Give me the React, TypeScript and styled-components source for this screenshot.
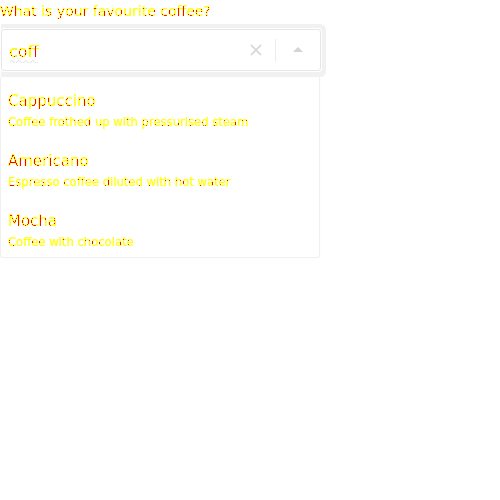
import React, { useState } from "react";
import styled, { createGlobalStyle, css } from "styled-components";

const GlobalStyle = createGlobalStyle`
    body {
        margin: 0;
        background: #ffffff;
        font-family: "DejaVu Sans", Verdana, sans-serif;
    }
`;

const coffees = [
    { name: "Cappuccino", description: "Coffee frothed up with pressurised steam" },
    { name: "Americano", description: "Espresso coffee diluted with hot water" },
    { name: "Mocha", description: "Coffee with chocolate" },
];

// posterises the antialiased text into white / yellow / red
const PosterFilter = () => (
    <svg width="0" height="0" style={{ position: "absolute" }}>
        <filter id="poster" colorInterpolationFilters="sRGB">
            <feComponentTransfer>
                <feFuncR type="discrete" tableValues="1" />
                <feFuncG type="discrete" tableValues="0 1 1 1 1 1 1 1" />
                <feFuncB type="discrete" tableValues="0 0 0 0 0 1 1 1" />
            </feComponentTransfer>
        </filter>
    </svg>
);

const posterText = css`
    width: max-content;
    color: #000000;
    -webkit-text-stroke: 0.25px #a0a0a0;
    filter: url(#poster);
`;

export default function App() {
    const [query, setQuery] = useState("coff");

    return (
        <>
            <GlobalStyle />
            <PosterFilter />
            <Page>
                <Label htmlFor="coffee">What is your favourite coffee?</Label>
                <FocusRing>
                    <Control>
                        <InputWrap>
                            <Input id="coffee" spellCheck={false} value={query} onChange={(e) => setQuery(e.currentTarget.value)} />
                            <Squiggle width="28" height="4" viewBox="0 0 28 4">
                                <path d="M0 3 Q1.75 0 3.5 3 T7 3 T10.5 3 T14 3 T17.5 3 T21 3 T24.5 3 T28 3" fill="none" stroke="#e0e0e0" strokeWidth="1" />
                            </Squiggle>
                        </InputWrap>
                        <Indicators>
                            <ClearButton aria-label="clear">
                                <svg width="12" height="12" viewBox="0 0 12 12">
                                    <path d="M1 1 L11 11 M11 1 L1 11" stroke="#d4d4d4" strokeWidth="1.6" />
                                </svg>
                            </ClearButton>
                            <Separator />
                            <ToggleButton aria-label="toggle">
                                <svg width="10" height="6" viewBox="0 0 10 6">
                                    <path d="M0 6 L5 1 L10 6 Z" fill="#d4d4d4" />
                                </svg>
                            </ToggleButton>
                        </Indicators>
                    </Control>
                </FocusRing>
                <Menu>
                    {coffees.map((c) => (
                        <Option key={c.name}>
                            <OptionTitle>{c.name}</OptionTitle>
                            <OptionText>{c.description}</OptionText>
                        </Option>
                    ))}
                </Menu>
            </Page>
        </>
    );
}

// STYLES
const Page = styled.div`
    width: 330px;
    padding-top: 3px;
`;

const Label = styled.label`
    ${posterText};
    display: block;
    font-size: 14px;
    line-height: 16px;
    margin-bottom: 5px;
`;

const FocusRing = styled.div`
    width: 320px;
    padding: 5px 5px 6px 0;
    margin-left: 1px;
    background: #f1f1f1;
    border-radius: 0 6px 6px 0;
`;

const Control = styled.div`
    display: flex;
    align-items: center;
    height: 40px;
    background: #ffffff;
    border: 1px solid #e6e6e6;
    border-radius: 3px;
    box-shadow: 0 0 0 1px #ffffff;
`;

const InputWrap = styled.div`
    position: relative;
    flex: 1;
    min-width: 0;
    display: flex;
    align-items: center;
    height: 100%;
    padding-top: 3px;
    box-sizing: border-box;
`;

const Input = styled.input`
    width: 100%;
    border: none;
    outline: none;
    padding: 0 0 0 7px;
    font-family: "DejaVu Sans", Verdana, sans-serif;
    font-size: 16px;
    color: #000000;
    -webkit-text-stroke: 0.25px #a0a0a0;
    background: #ffffff;
    filter: url(#poster);
`;

const Squiggle = styled.svg`
    position: absolute;
    left: 8px;
    top: 29px;
`;

const Indicators = styled.div`
    display: flex;
    align-items: center;
    height: 100%;
`;

const ClearButton = styled.div`
    display: flex;
    align-items: center;
    justify-content: center;
    width: 38px;
    height: 100%;
`;

const Separator = styled.span`
    width: 1px;
    height: 23px;
    background: #ececec;
`;

const ToggleButton = styled.div`
    display: flex;
    align-items: center;
    justify-content: center;
    width: 44px;
    height: 100%;
    padding-bottom: 2px;
`;

const Menu = styled.ul`
    list-style: none;
    margin: 0;
    padding: 0;
    width: 318px;
    border: 1px solid #f0f0f0;
    border-top: none;
    border-radius: 0 0 3px 3px;
    box-shadow: 0 1px 2px rgba(0, 0, 0, 0.04);
`;

const Option = styled.li`
    height: 60px;
    padding: 15px 0 0 7px;
    box-sizing: border-box;
`;

const OptionTitle = styled.div`
    ${posterText};
    font-size: 15px;
    line-height: 18px;
`;

const OptionText = styled.div`
    ${posterText};
    margin-top: 5px;
    font-size: 11.6px;
    line-height: 14px;
`;
